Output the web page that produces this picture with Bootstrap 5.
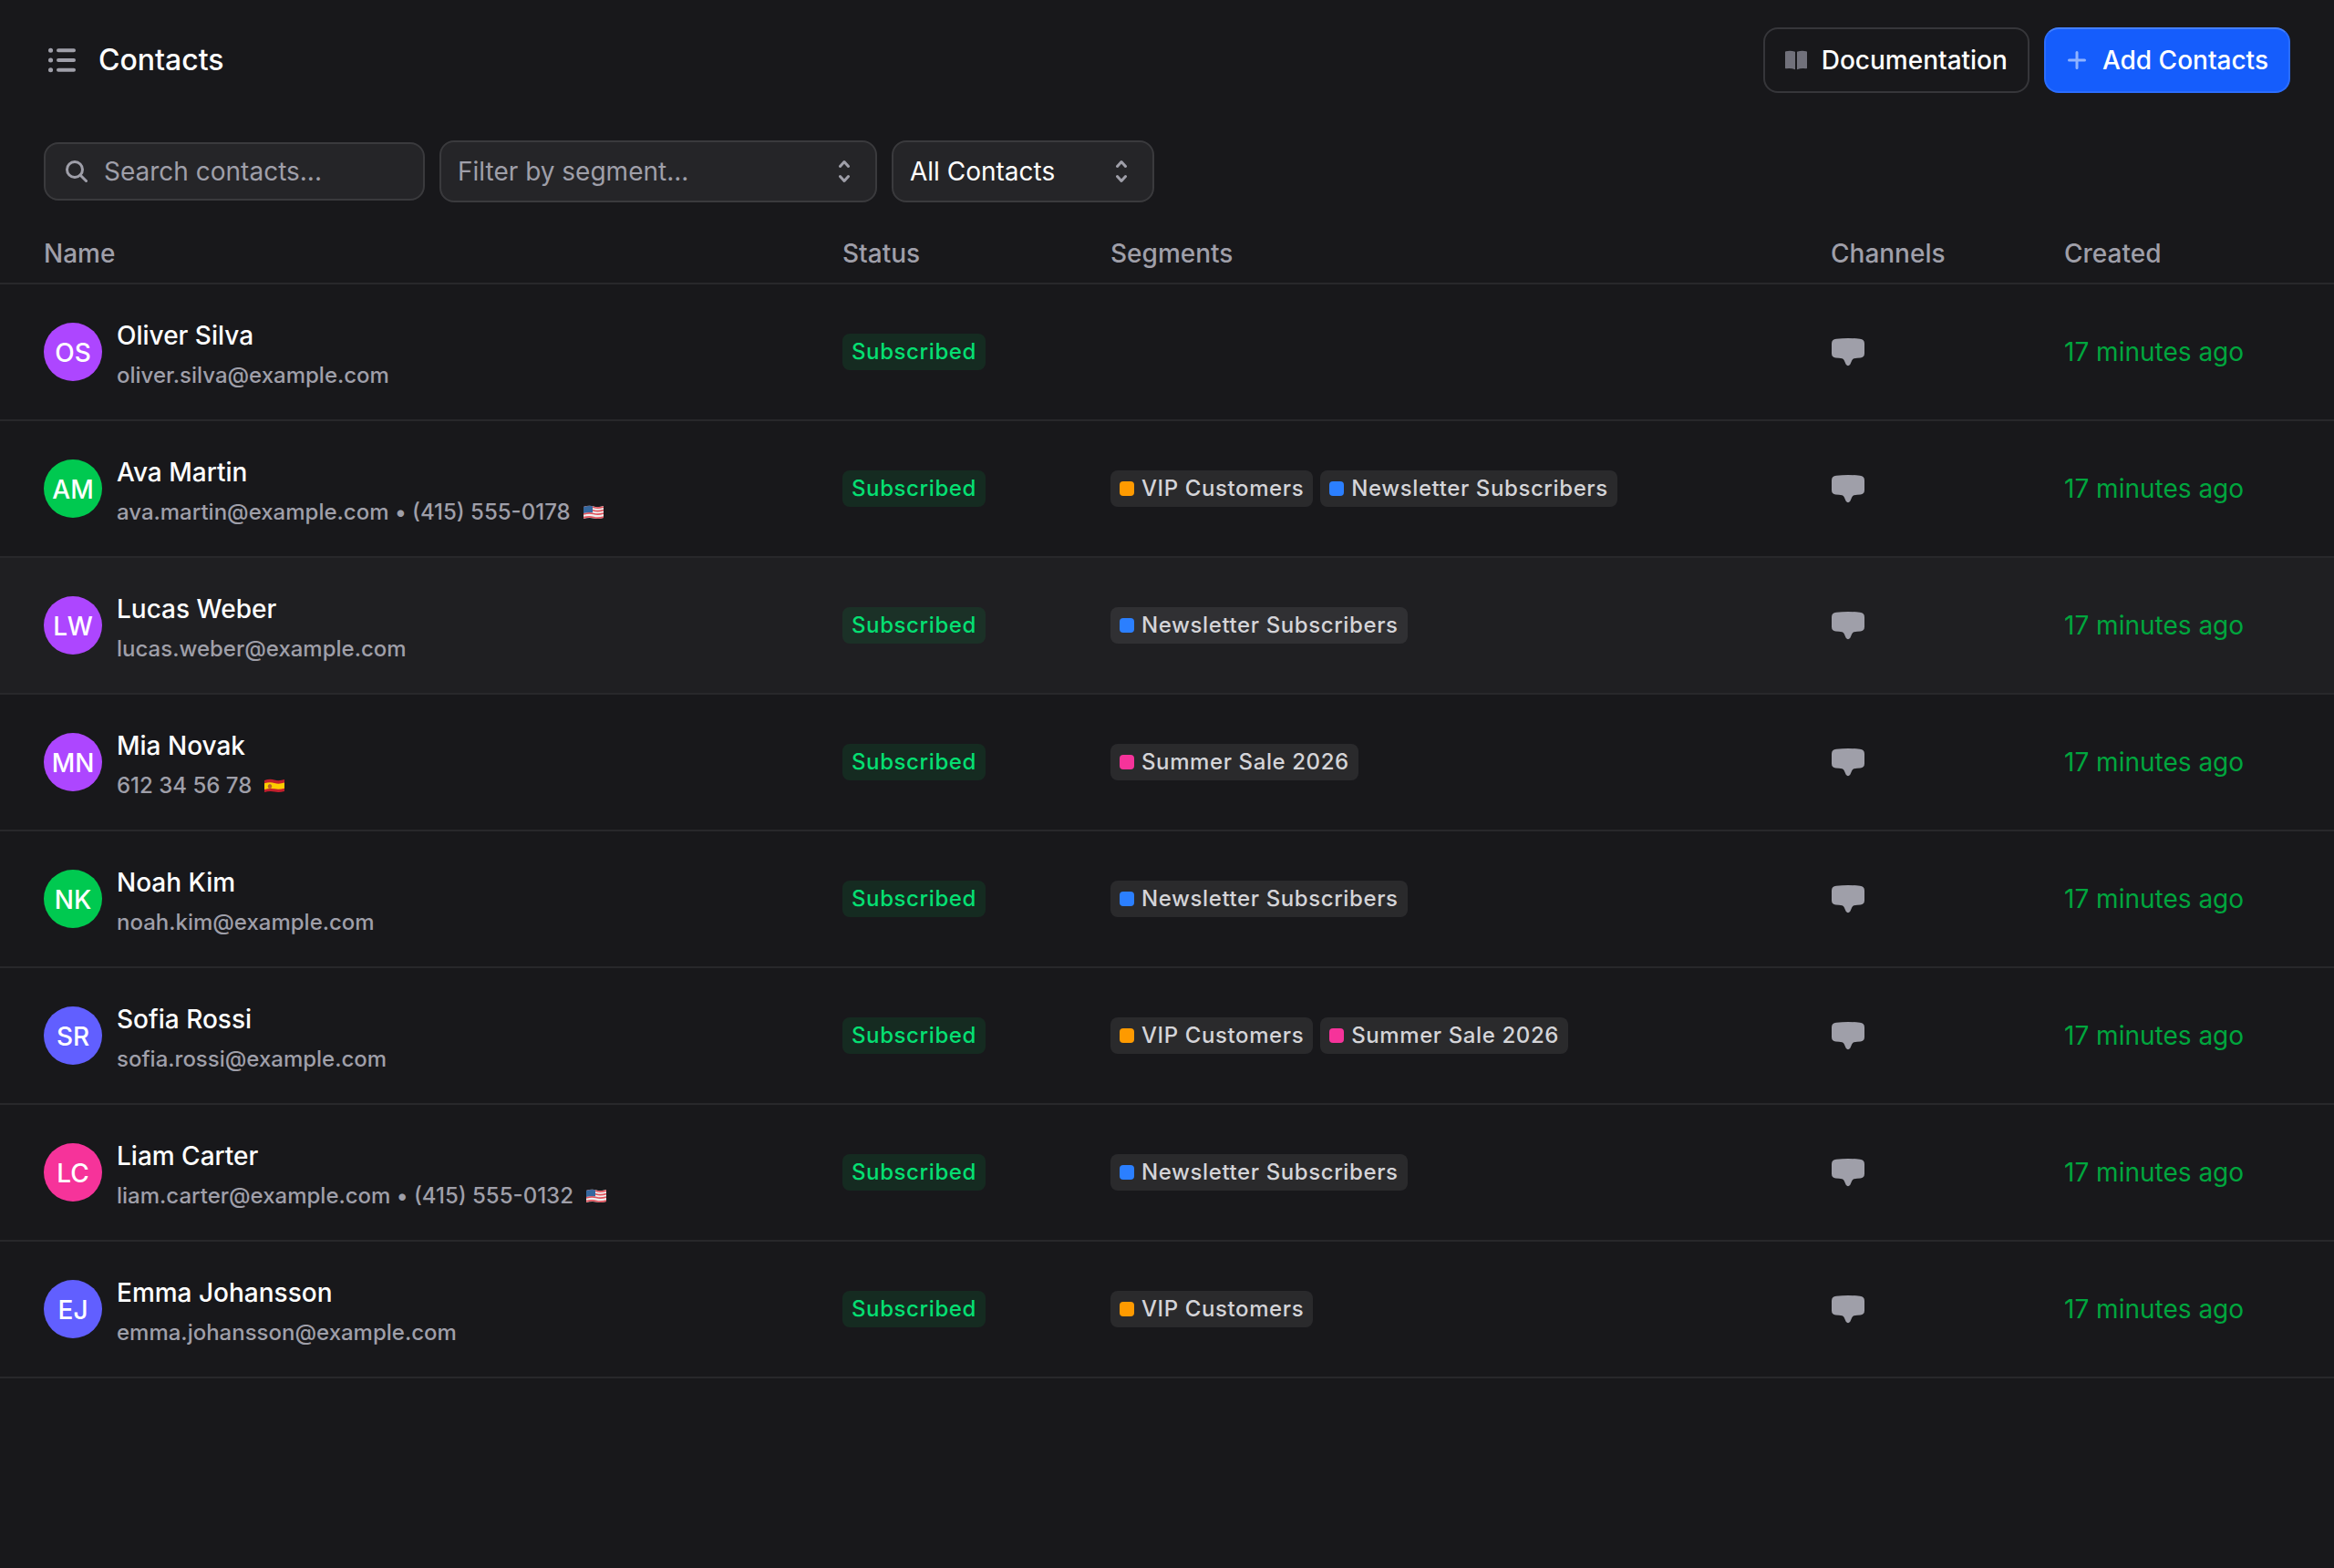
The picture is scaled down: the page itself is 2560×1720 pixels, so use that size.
<!DOCTYPE html>
<html lang="en" data-bs-theme="dark">
<head>
<meta charset="utf-8">
<meta name="viewport" content="width=device-width, initial-scale=1">
<title>Contacts</title>
<link href="https://cdn.jsdelivr.net/npm/bootstrap@5.3.0/dist/css/bootstrap.min.css" rel="stylesheet">
<style>
  :root { --page: #18181b; --muted: #9f9fa9; --line: #28282b; --field: #252528; --field-line: #3a3a3d; }
  body { font-family: Inter, "Liberation Sans", sans-serif; font-size: 28px; line-height: 40px; background: var(--page); color: #fff; }
  .topbar { padding: 30px 48px 0; }
  .page-title { font-size: 32px; line-height: 40px; font-weight: 500; gap: 24px; }
  .action { height: 72px; border: 2px solid #36363a; border-radius: 16px; font-size: 28px; line-height: 40px; font-weight: 500; color: #fff; padding: 0 22px; gap: 12px; }
  .action-main { background: #155dfc; border-color: #2b6dfd; border-top-color: #4480ff; }
  .filters { padding: 52px 48px 20px; gap: 16px; }
  .search-box { width: 418px; }
  .segment-box { width: 480px; }
  .state-box { width: 288px; }
  .field { background: var(--field); border: 2px solid var(--field-line); border-radius: 16px; color: #fff; font-size: 28px; line-height: 40px; padding: 0 18px; width: 100%; height: 68px; appearance: none; }
  .field-search { height: 64px; padding-left: 64px; }
  .field::placeholder, .field-empty { color: var(--muted); opacity: 1; }
  .glyph-start, .glyph-end { position: absolute; top: 50%; transform: translateY(-50%); pointer-events: none; }
  .glyph-start { left: 24px; }
  .glyph-end { right: 30px; }
  .people { table-layout: fixed; --bs-table-bg: transparent; --bs-table-color: #fff; }
  .people > thead > tr > th { padding: 16px 0 12px; font-weight: 500; color: var(--muted); border-bottom: 2px solid var(--line); }
  .people > tbody > tr > td { padding: 0; height: 150px; vertical-align: middle; border-bottom: 2px solid var(--line); }
  .people > thead > tr > th:first-child, .people > tbody > tr > td:first-child { padding-left: 48px; }
  .people > tbody > tr.is-hovered > td { background: #1f1f22; }
  .c-status { width: 294px; } .c-segments { width: 790px; } .c-channels { width: 256px; } .c-created { width: 296px; }
  .face { width: 64px; height: 64px; border-radius: 50%; font-weight: 500; padding-top: 2px; }
  .person { gap: 16px; }
  .person-name { font-weight: 500; }
  .person-info { font-size: 24px; line-height: 24px; color: var(--muted); margin-top: 12px; font-weight: 500; }
  .flag { margin-left: 14px; }
  .tag { font-size: 24px; line-height: 40px; font-weight: 500; border-radius: 8px; padding: 0 10px; background: rgba(255,255,255,.08); color: #d4d4d8; letter-spacing: .025em; }
  .tag-ok { background: rgba(0,201,80,.11); color: #05df72; }
  .dot { width: 16px; height: 16px; border-radius: 4px; }
  .when { color: #00a63e; }
  .purple { background: #ad46ff; } .green { background: #00c950; } .indigo { background: #615fff; } .pink { background: #f6339a; }
  .orange { background: #fe9a00; } .blue { background: #2b7fff; }
</style>
</head>
<body>
<svg class="d-none" aria-hidden="true">
  <symbol id="chat" viewBox="0 0 38 32"><path d="M6 1.800Q19 .2 32 1.800Q37 2.300 37 7V17.500Q37 22 32.500 22.600Q29 23 25.500 23.200Q24 23.500 23.300 25.200L21.300 29.800Q19 32.500 16.700 29.800L14.700 25.200Q14 23.500 12.500 23.200Q9 23 5.500 22.600Q1 22 1 17.500V7Q1 2.300 6 1.800Z" fill="#9f9fa9"/></symbol>
  <symbol id="us" viewBox="0 0 22 16"><path d="M0 2Q6 0 11 1.500T22 1V14Q16 15.500 11 14.500T0 15Z" fill="#eee"/><path d="M0 3Q6 1 11 2.500T22 2M0 6.500Q6 4.500 11 6T22 5.500M0 10Q6 8 11 9.500T22 9M0 13.800Q6 12 11 13.500T22 13" stroke="#e0525c" stroke-width="1.800" fill="none"/><path d="M0 2Q5 .3 10 1.300V8.300Q5 7.500 0 9Z" fill="#35689f"/></symbol>
  <symbol id="es" viewBox="0 0 22 16"><path d="M0 2Q6 0 11 1.500T22 1V14Q16 15.500 11 14.500T0 15Z" fill="#c3202c"/><path d="M0 5.300Q6 3.500 11 5T22 4.500V10.800Q16 12.300 11 11.300T0 12Z" fill="#fc0"/><ellipse cx="6" cy="8.500" rx="2.200" ry="2.600" fill="#b5622b"/></symbol>
</svg>

<header class="topbar d-flex align-items-center justify-content-between">
  <h1 class="page-title d-flex align-items-center mb-0">
    <svg width="36" height="32" viewBox="0 0 36 32" fill="none" stroke="#9f9fa9" stroke-linecap="round" aria-hidden="true"><path stroke-width="4" d="M16 5.300H33M16 16H33M16 26.700H33"/><path stroke-width="5" d="M7.500 5.300h.1M7.500 16h.1M7.500 26.700h.1"/></svg>
    Contacts
  </h1>
  <div class="d-flex gap-3">
    <a href="#docs" class="action btn d-flex align-items-center">
      <svg width="28" height="24" viewBox="0 0 28 24" fill="#71717b" aria-hidden="true"><path d="M0 3Q0 2.300 1 2.200Q6 1.200 11 2.700V22.300Q6 20.300 1 21.300Q0 21.500 0 20.500ZM13 2.700Q18 1.200 23 2.200Q24 2.300 24 3V20.500Q24 21.500 23 21.300Q18 20.300 13 22.300Z"/></svg>
      Documentation
    </a>
    <button type="button" class="action action-main btn d-flex align-items-center">
      <svg width="28" height="24" viewBox="0 0 28 24" fill="none" stroke="#8fb3ff" stroke-width="3" stroke-linecap="round" aria-hidden="true"><path d="M12 3.500V20.500M3.500 12H20.500"/></svg>
      Add Contacts
    </button>
  </div>
</header>

<form class="filters d-flex align-items-center">
  <div class="search-box position-relative d-flex">
    <input type="search" class="field field-search" placeholder="Search contacts..." aria-label="Search contacts">
    <svg class="glyph-start" width="24" height="24" viewBox="0 0 24 24" fill="none" stroke="#9f9fa9" stroke-width="3" stroke-linecap="round" aria-hidden="true"><circle cx="10" cy="10" r="8.500"/><path d="M16 16L22.500 22.500"/></svg>
  </div>
  <div class="segment-box position-relative d-flex">
    <select class="field field-empty" aria-label="Segment"><option>Filter by segment...</option></select>
    <svg class="glyph-end" width="12" height="26" viewBox="0 0 12 26" fill="none" stroke="#9f9fa9" stroke-width="3" stroke-linecap="round" stroke-linejoin="round" aria-hidden="true"><path d="M1.500 7.500L6 2.500L10.500 7.500M1.500 18.500L6 23.500L10.500 18.500"/></svg>
  </div>
  <div class="state-box position-relative d-flex">
    <select class="field" aria-label="Status"><option>All Contacts</option></select>
    <svg class="glyph-end" width="12" height="26" viewBox="0 0 12 26" fill="none" stroke="#9f9fa9" stroke-width="3" stroke-linecap="round" stroke-linejoin="round" aria-hidden="true"><path d="M1.500 7.500L6 2.500L10.500 7.500M1.500 18.500L6 23.500L10.500 18.500"/></svg>
  </div>
</form>

<table class="people table mb-0">
  <colgroup><col><col class="c-status"><col class="c-segments"><col class="c-channels"><col class="c-created"></colgroup>
  <thead><tr><th scope="col">Name</th><th scope="col">Status</th><th scope="col">Segments</th><th scope="col">Channels</th><th scope="col">Created</th></tr></thead>
  <tbody id="rows"></tbody>
</table>

<script src="https://cdn.jsdelivr.net/npm/bootstrap@5.3.0/dist/js/bootstrap.bundle.min.js"></script>
<script>
  const segments = { v: ['orange', 'VIP Customers'], n: ['blue', 'Newsletter Subscribers'], s: ['pink', 'Summer Sale 2026'] };
  const contacts = [
    ['OS', 'purple', 'Oliver Silva', 'oliver.silva@example.com', '', ''],
    ['AM', 'green', 'Ava Martin', 'ava.martin@example.com • (415) 555-0178', 'us', 'vn'],
    ['LW', 'purple', 'Lucas Weber', 'lucas.weber@example.com', '', 'n', 'is-hovered'],
    ['MN', 'purple', 'Mia Novak', '612 34 56 78', 'es', 's'],
    ['NK', 'green', 'Noah Kim', 'noah.kim@example.com', '', 'n'],
    ['SR', 'indigo', 'Sofia Rossi', 'sofia.rossi@example.com', '', 'vs'],
    ['LC', 'pink', 'Liam Carter', 'liam.carter@example.com • (415) 555-0132', 'us', 'n'],
    ['EJ', 'indigo', 'Emma Johansson', 'emma.johansson@example.com', '', 'v']
  ];
  document.getElementById('rows').innerHTML = contacts.map(([initials, color, name, info, flag, segs, state = '']) => `
    <tr class="${state}">
      <td><div class="person d-flex align-items-center">
        <span class="face ${color} d-flex align-items-center justify-content-center flex-shrink-0">${initials}</span>
        <div><div class="person-name">${name}</div>
        <div class="person-info d-flex align-items-center"><span>${info}</span>${flag ? `<svg class="flag" width="22" height="16" aria-hidden="true"><use href="#${flag}"/></svg>` : ''}</div></div>
      </div></td>
      <td><div class="d-flex"><span class="tag tag-ok">Subscribed</span></div></td>
      <td><div class="d-flex gap-2">${[...segs].map(k => `<span class="tag d-flex align-items-center gap-2"><span class="dot ${segments[k][0]}"></span>${segments[k][1]}</span>`).join('')}</div></td>
      <td><svg class="d-block" width="38" height="32" role="img" aria-label="Chat"><use href="#chat"/></svg></td>
      <td class="when">17 minutes ago</td>
    </tr>`).join('');
</script>
</body>
</html>
